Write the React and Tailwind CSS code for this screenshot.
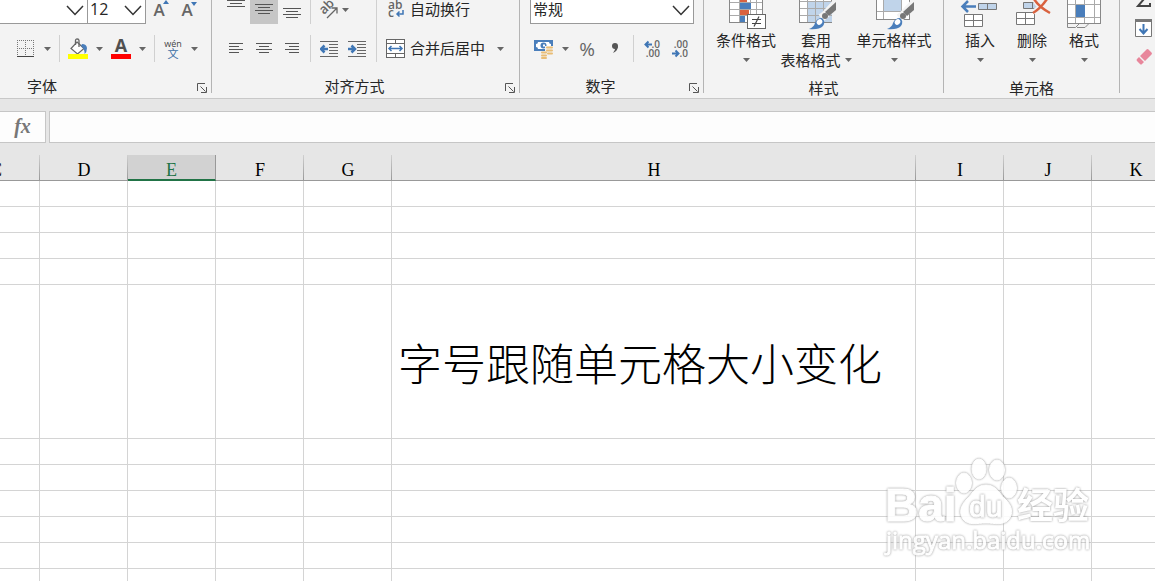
import { clsx } from 'clsx';

const columns = [
  { id: 'C', width: 88 },
  { id: 'D', width: 88 },
  { id: 'E', width: 88 },
  { id: 'F', width: 88 },
  { id: 'G', width: 88 },
  { id: 'H', width: 524 },
  { id: 'I', width: 88 },
  { id: 'J', width: 88 },
  { id: 'K', width: 88 },
];

const rows = [
  { id: 1 },
  { id: 2 },
  { id: 3 },
  { id: 4 },
  { id: 5, tall: true, cells: { H: '字号跟随单元格大小变化' } },
  { id: 6 },
  { id: 7 },
  { id: 8 },
  { id: 9 },
  { id: 10 },
  { id: 11 },
];

const activeColumn = 'E';

function Caret() {
  return (
    <svg width="7" height="4" viewBox="0 0 7 4" className="shrink-0">
      <path d="M0 0h7L3.5 4z" fill="#666" />
    </svg>
  );
}

function Divider({ className }) {
  return <div className={clsx('w-px shrink-0 bg-[#d0d0d0]', className)} />;
}

function IconButton({ label, active, className, children }) {
  return (
    <button
      aria-label={label}
      className={clsx('flex w-7 shrink-0 justify-center', active && 'bg-[#c6c6c6]', className || 'items-center')}
    >
      {children}
    </button>
  );
}

function SplitButton({ label, children }) {
  return (
    <button aria-label={label} className="flex shrink-0 items-center gap-2">
      {children}
      <Caret />
    </button>
  );
}

function Dropdown({ label, value, className }) {
  return (
    <div className={clsx('relative h-6', className)}>
      <select
        aria-label={label}
        defaultValue={value}
        className="block h-full w-full appearance-none rounded-none border-b border-[#999] bg-white pb-[5px] pl-[2px] leading-[18px] outline-none"
      >
        <option value={value}>{value}</option>
      </select>
      <svg width="18" height="11" viewBox="0 0 18 11" className="pointer-events-none absolute top-[5px] right-[3px]">
        <path d="M1 1l8 8.5L17 1" fill="none" stroke="#333" strokeWidth="1.5" />
      </svg>
    </div>
  );
}

function Launcher({ label }) {
  return (
    <button aria-label={label} className="mr-1 self-end">
      <svg width="10" height="10" viewBox="0 0 10 10" fill="none" stroke="#555">
        <path d="M.5 8V.5H8M3.5 3.5l5 5M9.5 4v5.5H4" />
      </svg>
    </button>
  );
}

function Group({ title, launcher, className, titleClass = 'justify-center', children }) {
  return (
    <section className={clsx('flex h-[93px] shrink-0 flex-col gap-[11px] border-r border-[#b4b4b4]', className)}>
      {children}
      <div className="mt-auto flex h-[14px] items-center">
        <h2 className={clsx('flex flex-1 leading-[14px]', titleClass)}>{title}</h2>
        {launcher && <Launcher label={title + '设置'} />}
      </div>
    </section>
  );
}

function LargeButton({ icon, lines, className }) {
  return (
    <button className={clsx('flex flex-col items-center', className)}>
      {icon}
      <span className="leading-5">{lines[0]}</span>
      <span className="flex h-5 items-center gap-1 whitespace-nowrap">
        {lines[1]}
        <Caret />
      </span>
    </button>
  );
}

/* Lines of text, given as [x, y, width] */
function LinesIcon({ lines }) {
  return (
    <svg width="18" height="14" viewBox="0 0 18 14" fill="#555">
      {lines.map(([x, y, w]) => (
        <rect key={y} x={x} y={y} width={w} height="1" />
      ))}
    </svg>
  );
}

function BordersIcon() {
  return (
    <svg width="20" height="20" viewBox="0 0 20 20" fill="none" stroke="#777">
      <path d="M1 1.5h17M1.5 1v15M9.5 1v15M17.5 1v15M1 9.5h17" strokeDasharray="1 1" />
      <path d="M1 17.5h17" stroke="#444" />
    </svg>
  );
}

function FillIcon() {
  return (
    <svg width="20" height="22" viewBox="0 0 20 22">
      <path d="M9 4l7 6.5-6.5 5.5L3 10.5z" fill="#fff" stroke="#666" strokeWidth="1.2" />
      <path d="M7.5 7V2.500Q7.500 1 9.200 1t1.800 1.500V9" fill="none" stroke="#666" strokeWidth="1.300" />
      <path d="M14 6q4.500 0 5 4 0 4-2.500 6 .5-5-3.500-8z" fill="#4a7ebb" />
      <rect y="16" width="20" height="5" fill="#ff0" />
    </svg>
  );
}

function FontColorIcon() {
  return (
    <svg width="20" height="22" viewBox="0 0 20 22" className="overflow-visible">
      <text x="10" y="14" textAnchor="middle" className="font-['Open_Sans',sans-serif] text-[18px] font-bold" fill="#505050">
        A
      </text>
      <rect y="16" width="20" height="5" fill="#f00" />
    </svg>
  );
}

function PhoneticIcon() {
  return (
    <svg width="20" height="22" viewBox="0 0 20 22" className="overflow-visible">
      <text x="10" y="9" textAnchor="middle" className="font-['Open_Sans',sans-serif] text-[9px]" fill="#444">
        wén
      </text>
      <text x="10" y="20" textAnchor="middle" className="text-[11px]" fill="#3a6ea5">
        文
      </text>
    </svg>
  );
}

function FontSizeIcon({ grow }) {
  return (
    <svg width="20" height="20" viewBox="0 0 20 20" className="overflow-visible">
      <text x="9" y="14" textAnchor="middle" className="font-['Open_Sans',sans-serif] text-[17px] font-semibold" fill="#666">
        A
      </text>
      <path d={grow ? 'M13 2l3-4 3 4z' : 'M13 0h6l-3 4z'} fill="#3f76b5" />
    </svg>
  );
}

function OrientationIcon() {
  return (
    <svg width="19" height="20" viewBox="0 0 19 20" className="overflow-visible">
      <text x="5" y="15" transform="rotate(-45 5 15)" className="font-['Open_Sans',sans-serif] text-[13px] font-semibold" fill="#666">
        ab
      </text>
      <path d="M8 18l10-10M12.500 8H18v5.500" fill="none" stroke="#666" strokeWidth="1.300" />
    </svg>
  );
}

function IndentIcon({ increase }) {
  return (
    <svg width="18" height="16" viewBox="0 0 18 16">
      <path d="M0 .5h18M9 3.500h9M9 6.500h9M9 9.500h9M9 12.500h9M0 15.500h18" stroke="#666" />
      <path
        d={increase ? 'M0 8h7M3.500 4.500L7 8l-3.500 3.500' : 'M8 8H1M4.500 4.500L1 8l3.500 3.500'}
        fill="none"
        stroke="#3f76b5"
        strokeWidth="2.500"
      />
    </svg>
  );
}

function WrapIcon() {
  return (
    <svg width="20" height="20" viewBox="0 0 20 20" className="overflow-visible">
      <g className="font-['Open_Sans',sans-serif] text-[12px] font-semibold" fill="#666">
        <text x="2" y="10">ab</text>
        <text x="2" y="18">c</text>
      </g>
      <path d="M17 11v4h-6M13.500 12.500L11 15l2.500 2.500" fill="none" stroke="#3f76b5" strokeWidth="1.500" />
    </svg>
  );
}

function MergeIcon() {
  return (
    <svg width="20" height="20" viewBox="0 0 20 20">
      <rect x=".5" y=".5" width="18" height="18" fill="#fff" stroke="#666" />
      <path d="M1 4.500h17M1 14.500h17M9.500 1v3M9.500 15v3" stroke="#666" />
      <path d="M3 9.500h13M5.500 7L3 9.500 5.500 12M13.500 7L16 9.500 13.500 12" fill="none" stroke="#3f76b5" strokeWidth="1.500" />
    </svg>
  );
}

function CurrencyIcon() {
  return (
    <svg width="20" height="20" viewBox="0 0 20 20">
      <rect width="19" height="11" y="1" fill="#4a7ebb" />
      <path d="M4 3h11q0 2 2 2v3q-2 0-2 2H4q0-2-2-2V5q2 0 2-2z" fill="#fff" />
      <circle cx="9.500" cy="6.500" r="3" fill="#4a7ebb" />
      <path d="M9 5.500h2v2H9z" fill="#fff" />
      <rect x="11" y="7" width="9" height="11" fill="#f3f3f3" />
      <rect x="6" y="12" width="9" height="8" fill="#f3f3f3" />
      <g stroke="#e9bd76" strokeWidth="2" strokeLinecap="round">
        <path d="M13 8.500h5M13 11.500h5M14 14.500h4M8 13.500h4M8 16.500h4M8 19h4" />
      </g>
    </svg>
  );
}

function DecimalIcon({ increase }) {
  return (
    <svg width="18" height="20" viewBox="0 0 18 20" className="overflow-visible">
      <g className="font-['Open_Sans',sans-serif] text-[10px] font-semibold" fill="#666" textAnchor="end">
        <text x="17" y="9">{increase ? '.0' : '.00'}</text>
        <text x="17" y="18">{increase ? '.00' : '.0'}</text>
      </g>
      <path
        d={increase ? 'M9 5.500H2.500M5.500 2.500l-3 3 3 3' : 'M1 14.500h6M4.500 11.500l3 3-3 3'}
        fill="none"
        stroke="#3f76b5"
        strokeWidth="2"
      />
    </svg>
  );
}

function ConditionalIcon() {
  return (
    <svg width="40" height="30" viewBox="0 0 40 30">
      <rect x="3.500" y="-8" width="33" height="30.500" fill="#fff" stroke="#888" />
      <path d="M13.500 0v22M24.500 0v22M30.500 0v22M4 2.500h32M4 9.500h32M4 15.500h32" stroke="#aaa" />
      <path d="M14 0h7v2h-7zM14 10h9v5h-9z" fill="#d9623f" />
      <path d="M14 3h11v6H14zM14 16h5v6h-5z" fill="#4a7ebb" />
      <rect x="21.500" y="14.500" width="18" height="14" fill="#fff" stroke="#666" />
      <path d="M26 19.500h9M26 23.500h9M33 16.500l-5 10" stroke="#444" strokeWidth="1.200" />
    </svg>
  );
}

function Brush() {
  return (
    <>
      <path d="M40 3L29 15l-4 3" stroke="#f3f3f3" strokeWidth="8" fill="none" />
      <path d="M40 2v8l-7 6-4-4z" fill="#777" />
      <circle cx="29" cy="16" r="3" fill="#777" />
      <path d="M13 29q5-2 6-6 2-5 7-5 4 3 1 8-4 4-14 3z" fill="#4a7ebb" />
      <ellipse cx="23.500" cy="22" rx="3" ry="2.500" transform="rotate(-40 23.500 22)" fill="#fff" />
    </>
  );
}

function TableFormatIcon() {
  return (
    <svg width="40" height="30" viewBox="0 0 40 30">
      <rect x="3.500" y="-8" width="32" height="30.500" fill="#fff" stroke="#888" />
      <path d="M12 2h24v20H12z" fill="#c0d4ea" />
      <path d="M11.500 0v22M19.500 0v22M27.500 0v22M4 1.500h32M4 8.500h32M4 15.500h32" stroke="#aaa" />
      <Brush />
    </svg>
  );
}

function CellStyleIcon() {
  return (
    <svg width="40" height="30" viewBox="0 0 40 30">
      <rect x="2.500" y="-8" width="33" height="27.500" fill="#fff" stroke="#888" />
      <path d="M9.500 0v19M27.500 0v19M3 11.500h32" stroke="#aaa" />
      <path d="M10 0h17v11H10z" fill="#c0d4ea" />
      <Brush />
    </svg>
  );
}

function InsertIcon() {
  return (
    <svg width="40" height="30" viewBox="0 0 40 30">
      <path d="M16 6.500H3M8 1L2.500 6.500 8 12" fill="none" stroke="#4a7ebb" strokeWidth="2.500" />
      <g stroke="#777">
        <path d="M18.500 3.500h18v6h-18zM27.500 3.500v6" fill="#c0d4ea" />
        <path d="M4.500 14.500h18v12h-18zM13.500 14.500v12M4.500 20.500h18" fill="#fff" />
      </g>
    </svg>
  );
}

function DeleteIcon() {
  return (
    <svg width="40" height="30" viewBox="0 0 40 30">
      <g stroke="#777">
        <path d="M11.500 2.500h14v6h-14zM20.500 2.500v6" fill="#c0d4ea" />
        <path d="M4.500 12.500h18v12h-18zM13.500 12.500v12M4.500 18.500h18" fill="#fff" />
      </g>
      <path d="M21 12q8-4 14-13M22-1q5 9 16 14" fill="none" stroke="#f3f3f3" strokeWidth="5" />
      <path d="M21 13q8-5 14-14M22-1q5 8 16 14" fill="none" stroke="#d9623f" strokeWidth="2.500" />
    </svg>
  );
}

function FormatIcon() {
  return (
    <svg width="40" height="30" viewBox="0 0 40 30">
      <rect x="3.500" y="-8" width="33" height="31.500" fill="#fff" stroke="#888" />
      <path d="M11.500 0v23M20.500 0v23M30.500 0v23M4 4.500h32M4 17.500h32" stroke="#aaa" />
      <path d="M12 5h9v12h-9z" fill="#4a7ebb" />
      <path d="M3.500 24v3.500h8l4-4M13 27.500h8l4-4" fill="none" stroke="#888" />
    </svg>
  );
}

function Ribbon() {
  return (
    <header className="flex border-b border-[#c8c8c8] bg-[#f3f3f3] pb-[5px]">
      <Group title="字体" launcher className="w-[212px]" titleClass="pl-[27px]">
        <div className="flex h-6">
          <Dropdown label="字体名称" value="" className="w-[88px] border-r border-[#999]" />
          <Dropdown label="字号" value="12" className="w-[58px] border-r border-[#999] font-['Open_Sans',sans-serif] text-base" />
          <IconButton label="增大字号"><FontSizeIcon grow /></IconButton>
          <IconButton label="减小字号"><FontSizeIcon /></IconButton>
        </div>
        <div className="flex h-[27px] gap-2 pl-4">
          <SplitButton label="边框"><BordersIcon /></SplitButton>
          <Divider />
          <SplitButton label="填充颜色"><FillIcon /></SplitButton>
          <SplitButton label="字体颜色"><FontColorIcon /></SplitButton>
          <Divider />
          <SplitButton label="拼音指南"><PhoneticIcon /></SplitButton>
        </div>
      </Group>

      <Group title="对齐方式" launcher className="w-[308px]" titleClass="justify-center pr-2">
        <div className="flex h-[62px]">
          <div className="flex flex-col justify-between pr-[5px] pl-[10px]">
            <div className="flex h-6 gap-1">
              <div className="flex">
                <IconButton label="顶端对齐" className="items-start">
                  <LinesIcon lines={[[0, 0, 18], [3, 3, 12], [0, 6, 18]]} />
                </IconButton>
                <IconButton label="垂直居中" active className="items-center pb-1">
                  <LinesIcon lines={[[0, 1, 18], [3, 4, 12], [0, 7, 18], [3, 10, 12]]} />
                </IconButton>
                <IconButton label="底端对齐" className="items-center pt-1">
                  <LinesIcon lines={[[0, 1, 18], [3, 4, 12], [0, 7, 18], [3, 10, 12]]} />
                </IconButton>
              </div>
              <Divider />
              <button aria-label="方向" className="flex items-center gap-1 pb-1 pl-1">
                <OrientationIcon />
                <Caret />
              </button>
            </div>
            <div className="flex h-[27px] gap-1">
              <div className="flex">
                <IconButton label="左对齐">
                  <LinesIcon lines={[[2, 1, 14], [2, 4, 10], [2, 7, 14], [2, 10, 10]]} />
                </IconButton>
                <IconButton label="居中">
                  <LinesIcon lines={[[1, 1, 16], [4, 4, 10], [1, 7, 16], [4, 10, 10]]} />
                </IconButton>
                <IconButton label="右对齐">
                  <LinesIcon lines={[[2, 1, 14], [6, 4, 10], [2, 7, 14], [6, 10, 10]]} />
                </IconButton>
              </div>
              <Divider />
              <div className="flex">
                <IconButton label="减少缩进量"><IndentIcon /></IconButton>
                <IconButton label="增加缩进量"><IndentIcon increase /></IconButton>
              </div>
            </div>
          </div>
          <Divider />
          <div className="flex flex-col items-start justify-between pl-[9px]">
            <button className="flex h-6 items-center gap-1 pb-[6px]">
              <WrapIcon />
              自动换行
            </button>
            <button className="flex h-[27px] items-center gap-1">
              <MergeIcon />
              <span className="mr-2">合并后居中</span>
              <Caret />
            </button>
          </div>
        </div>
      </Group>

      <Group title="数字" launcher className="w-[184px]" titleClass="justify-center pr-2">
        <div className="pr-[9px] pl-[10px]">
          <Dropdown label="数字格式" value="常规" className="border-x border-[#999]" />
        </div>
        <div className="flex h-[27px] gap-1 pl-[14px]">
          <SplitButton label="会计数字格式"><CurrencyIcon /></SplitButton>
          <div className="flex">
            <IconButton label="百分比样式">
              <span className="font-['Open_Sans',sans-serif] text-[19px] leading-6 text-[#666]">%</span>
            </IconButton>
            <IconButton label="千位分隔样式">
              <svg width="8" height="12" viewBox="0 0 8 12">
                <circle cx="4" cy="3" r="3" fill="#555" />
                <path d="M7 3q0 5-5 7 2.500-3 2-5" fill="#555" />
              </svg>
            </IconButton>
          </div>
          <Divider />
          <div className="flex">
            <IconButton label="增加小数位数"><DecimalIcon increase /></IconButton>
            <IconButton label="减少小数位数"><DecimalIcon /></IconButton>
          </div>
        </div>
      </Group>

      <Group title="样式" className="w-[240px]">
        <div className="flex h-[70px] pl-2">
          <LargeButton icon={<ConditionalIcon />} lines={['条件格式']} className="w-[68px]" />
          <LargeButton icon={<TableFormatIcon />} lines={['套用', '表格格式']} className="w-[72px]" />
          <LargeButton icon={<CellStyleIcon />} lines={['单元格样式']} className="w-[84px]" />
        </div>
      </Group>

      <Group title="单元格" className="w-[176px]">
        <div className="flex h-[70px] pl-[10px]">
          <LargeButton icon={<InsertIcon />} lines={['插入']} className="w-[52px]" />
          <LargeButton icon={<DeleteIcon />} lines={['删除']} className="w-[52px]" />
          <LargeButton icon={<FormatIcon />} lines={['格式']} className="w-[52px]" />
        </div>
      </Group>

      <div className="flex flex-1 flex-col items-start gap-[11px] overflow-hidden pl-[15px]">
        <button aria-label="自动求和" className="shrink-0">
          <svg width="18" height="8" viewBox="0 0 18 8">
            <path d="M9-1L3 6h12V3" fill="none" stroke="#444" strokeWidth="2" />
          </svg>
        </button>
        <button aria-label="填充" className="shrink-0">
          <svg width="18" height="18" viewBox="0 0 18 18">
            <path d="M.5.5h16v17H.5z" fill="#fff" stroke="#777" />
            <path d="M0 0h17v3H0z" fill="#777" />
            <path d="M8.500 5v9M4.500 10l4 4.500 4-4.500" fill="none" stroke="#3f76b5" strokeWidth="2" />
          </svg>
        </button>
        <button aria-label="清除" className="shrink-0">
          <svg width="18" height="18" viewBox="0 0 18 18">
            <path d="M11.500 1.500q1-1 2 0l3 3q1 1 0 2L10 13l-5-5zM4 9l5 5-2 2q-1 1-2 0l-3-3q-1-1 0-2z" fill="#e8869b" />
          </svg>
        </button>
      </div>
    </header>
  );
}

function FormulaBar() {
  return (
    <div className="flex gap-[3px] py-3">
      <button
        aria-label="插入函数"
        className="h-8 w-[46px] shrink-0 border border-l-0 border-[#c6c6c6] bg-[#fdfdfd] pb-[2px] font-['Liberation_Serif',serif] text-xl leading-6 font-bold text-[#777] italic"
      >
        fx
      </button>
      <input
        aria-label="编辑栏"
        className="h-8 min-w-0 flex-1 border border-r-0 border-[#c6c6c6] bg-[#fdfdfd] px-2 outline-none"
      />
    </div>
  );
}

function Sheet() {
  return (
    <div className="flex-1 overflow-hidden bg-white">
      <table className="-ml-12 w-max table-fixed border-separate border-spacing-0">
        <colgroup>
          {columns.map((col) => (
            <col key={col.id} style={{ width: col.width }} />
          ))}
        </colgroup>
        <thead>
          <tr className="font-['Liberation_Serif',serif] text-lg leading-[22px]">
            {columns.map((col) => (
              <th
                key={col.id}
                scope="col"
                className={clsx(
                  'h-[26px] p-0 pt-1 align-top font-normal',
                  col.id === activeColumn
                    ? 'border-r border-b-2 border-r-[#999] border-b-[#217346] bg-[#d2d2d2] text-[#217346]'
                    : 'border-b border-[#999] bg-[#e6e6e6] bg-[linear-gradient(to_bottom,#d0d0d0,#999)] bg-[length:1px_100%] bg-right bg-no-repeat text-black'
                )}
              >
                <div className="h-5">{col.id}</div>
              </th>
            ))}
          </tr>
        </thead>
        <tbody>
          {rows.map((row) => (
            <tr key={row.id} className={row.tall ? 'h-[154px]' : 'h-[26px]'}>
              {columns.map((col) => (
                <td
                  key={col.id}
                  className="border-r border-b border-[#d4d4d4] p-0 pl-[6px] text-[44px] leading-[48px] font-light whitespace-nowrap text-black"
                >
                  {row.cells?.[col.id]}
                </td>
              ))}
            </tr>
          ))}
        </tbody>
      </table>
    </div>
  );
}

/* White shapes that only show by the grey glow around each of them */
function Watermark() {
  const glow = '[filter:drop-shadow(0_0_1px_#888)]';

  return (
    <svg
      width="216"
      height="106"
      viewBox="0 0 216 106"
      className="pointer-events-none absolute right-[59px] bottom-5 opacity-90"
      fill="#fff"
      stroke="#fff"
      strokeWidth="1"
    >
      <text x="5" y="66" className={clsx("font-['Liberation_Sans',sans-serif] text-[46px] font-bold", glow)}>
        Bai
      </text>
      <g className={glow}>
        <ellipse cx="84" cy="28" rx="7.500" ry="10" />
        <ellipse cx="99" cy="14" rx="7" ry="10" />
        <ellipse cx="117" cy="15" rx="7.500" ry="10" />
        <ellipse cx="129" cy="33" rx="7.500" ry="10" />
      </g>
      <path
        className={glow}
        d="M106 30c10 0 13 8 19 14 8 7 8 15 4 20-5 7-14 4-23 4s-18 3-23-4c-4-6-3-13 4-20 6-6 9-14 19-14z"
      />
      <text x="89" y="62" className={clsx("font-['Liberation_Sans',sans-serif] text-[30px]", glow)}>
        du
      </text>
      <text x="137" y="64" strokeWidth="0" className={clsx('text-[36px] font-bold', glow)}>
        经验
      </text>
      <text x="6" y="94" className={clsx("font-['Open_Sans',sans-serif] text-[24px]", glow)}>
        jingyan.baidu.com
      </text>
    </svg>
  );
}

export default function App() {
  return (
    <main className="relative flex h-screen flex-col overflow-hidden bg-[#e6e6e6] font-['Noto_Sans_CJK_SC',sans-serif] text-[15px] text-[#262626]">
      <Ribbon />
      <FormulaBar />
      <Sheet />
      <Watermark />
    </main>
  );
}
